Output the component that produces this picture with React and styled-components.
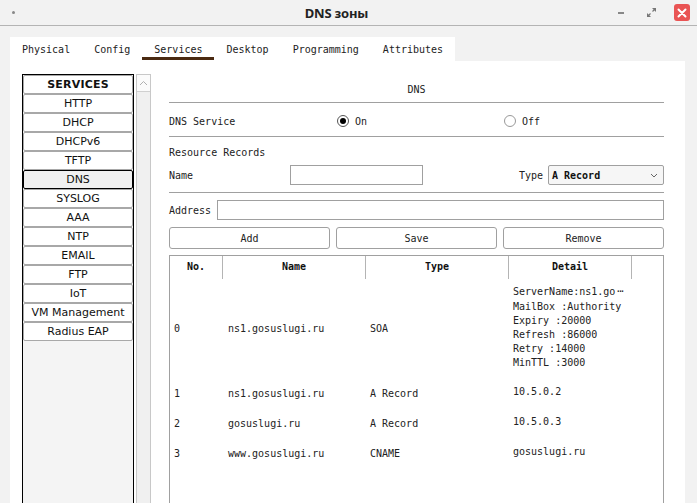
import React from "react";
import styled, { createGlobalStyle } from "styled-components";

const GlobalStyle = createGlobalStyle`
  html, body {
    margin: 0;
    padding: 0;
    background: #f2f2f2;
  }
  * { box-sizing: border-box; }
`;

const MONO = `"DejaVu Sans Mono", "Liberation Mono", monospace`;
const SANS = `"DejaVu Sans", Verdana, sans-serif`;

const services = [
  "HTTP", "DHCP", "DHCPv6", "TFTP", "DNS", "SYSLOG", "AAA",
  "NTP", "EMAIL", "FTP", "IoT", "VM Management", "Radius EAP",
];

const tabs = ["Physical", "Config", "Services", "Desktop", "Programming", "Attributes"];

const records = [
  {
    no: "0", name: "ns1.gosuslugi.ru", type: "SOA",
    detail: [
      "ServerName:ns1.go",
      "MailBox :Authority",
      "Expiry :20000",
      "Refresh :86000",
      "Retry :14000",
      "MinTTL :3000",
    ],
    clipped: true,
  },
  { no: "1", name: "ns1.gosuslugi.ru", type: "A Record", detail: ["10.5.0.2"] },
  { no: "2", name: "gosuslugi.ru", type: "A Record", detail: ["10.5.0.3"] },
  { no: "3", name: "www.gosuslugi.ru", type: "CNAME", detail: ["gosuslugi.ru"] },
];

export default function App() {
  return (
    <>
      <GlobalStyle />
      <Window>
        <TitleBar>
          <MenuDot />
          <Title>DNS зоны</Title>
          <WinControls>
            <MinButton />
            <RestoreIcon width="9" height="9" viewBox="0 0 9 9">
              <path d="M5 0h4v4z M0 9V5l4 4z" fill="#777" />
              <path d="M8 1L5.5 3.5 M1 8l2.5-2.5" stroke="#777" strokeWidth="1.2" />
            </RestoreIcon>
            <CloseButton>
              <svg width="10" height="10" viewBox="0 0 10 10">
                <path d="M1.5 1.5l7 7M8.5 1.5l-7 7" stroke="#fff" strokeWidth="2" strokeLinecap="round" />
              </svg>
            </CloseButton>
          </WinControls>
        </TitleBar>

        <Body>
          <TabStrip>
            {tabs.map((t) => (
              <Tab key={t} active={t === "Services"}>{t}</Tab>
            ))}
          </TabStrip>

          <Panel>
            <Sidebar>
              <ServiceList>
                <ServiceItem header>SERVICES</ServiceItem>
                {services.map((s) => (
                  <ServiceItem key={s} selected={s === "DNS"}>{s}</ServiceItem>
                ))}
              </ServiceList>
              <ScrollTrack>
                <ScrollUp>
                  <svg width="9" height="6" viewBox="0 0 9 6">
                    <path d="M1 5l3.5-3.5L8 5" fill="none" stroke="#b0b0b0" strokeWidth="1" />
                  </svg>
                </ScrollUp>
              </ScrollTrack>
            </Sidebar>

            <Content>
              <Heading>DNS</Heading>
              <Divider />
              <ServiceRow>
                <Label>DNS Service</Label>
                <RadioOption>
                  <Radio checked />
                  On
                </RadioOption>
                <RadioOption>
                  <Radio />
                  Off
                </RadioOption>
              </ServiceRow>
              <Divider />
              <SectionLabel>Resource Records</SectionLabel>
              <NameRow>
                <NameLabel>Name</NameLabel>
                <TextBox width={133} />
                <Spacer />
                <Label>Type</Label>
                <SelectBox>
                  <span>A Record</span>
                  <svg width="8" height="5" viewBox="0 0 8 5">
                    <path d="M1 1l3 3 3-3" fill="none" stroke="#666" strokeWidth="1" />
                  </svg>
                </SelectBox>
              </NameRow>
              <Divider />
              <AddressRow>
                <Label>Address</Label>
                <TextBox grow />
              </AddressRow>
              <ButtonRow>
                <ActionButton>Add</ActionButton>
                <ActionButton>Save</ActionButton>
                <ActionButton>Remove</ActionButton>
              </ButtonRow>

              <Table>
                <HeaderRow>
                  <HeadCell>No.</HeadCell>
                  <HeadCell>Name</HeadCell>
                  <HeadCell>Type</HeadCell>
                  <HeadCell>Detail</HeadCell>
                  <HeadCell />
                </HeaderRow>
                {records.map((r) => (
                  <DataRow key={r.no} tall={r.detail.length > 1}>
                    <Cell>{r.no}</Cell>
                    <Cell>{r.name}</Cell>
                    <Cell>{r.type}</Cell>
                    <Cell>
                      <DetailLines>
                        {r.detail.map((d, i) => (
                          <div key={d}>
                            {d}
                            {r.clipped && i === 0 && <Ellipsis>···</Ellipsis>}
                          </div>
                        ))}
                      </DetailLines>
                    </Cell>
                    <Cell />
                  </DataRow>
                ))}
              </Table>
            </Content>
          </Panel>
        </Body>
      </Window>
    </>
  );
}

const Window = styled.div`
  width: 697px;
  height: 503px;
  display: flex;
  flex-direction: column;
  overflow: hidden;
  background: #f2f2f2;
`;

const TitleBar = styled.div`
  height: 26px;
  flex-shrink: 0;
  border-bottom: 1px solid #b4b4b4;
  display: flex;
  align-items: center;
  padding: 0 7px 0 12px;
`;

const MenuDot = styled.div`
  width: 3px;
  height: 3px;
  border-radius: 50%;
  background: #888;
`;

const Title = styled.div`
  flex: 1;
  text-align: center;
  font-family: "Noto Sans", "Open Sans", sans-serif;
  font-weight: 700;
  font-size: 13px;
  color: #222;
  letter-spacing: -0.2px;
  padding-left: 40px;
`;

const WinControls = styled.div`
  display: flex;
  align-items: center;
`;

const MinButton = styled.div`
  width: 6px;
  height: 2px;
  background: #888;
  margin-right: 23px;
`;

const RestoreIcon = styled.svg`
  margin-right: 18px;
`;

const CloseButton = styled.div`
  width: 16px;
  height: 17px;
  border-radius: 3px;
  background: #e95454;
  display: flex;
  align-items: center;
  justify-content: center;
`;

const Body = styled.div`
  flex: 1;
  display: flex;
  flex-direction: column;
  padding: 11px 12px 0 10px;
  min-height: 0;
`;

const TabStrip = styled.div`
  display: flex;
  align-self: flex-start;
  background: #fff;
  height: 24px;
`;

const Tab = styled.div`
  position: relative;
  padding: 0 12px;
  height: 24px;
  display: flex;
  align-items: center;
  font-family: ${MONO};
  font-size: 10px;
  color: #222;

  &::after {
    content: "";
    display: ${(p) => (p.active ? "block" : "none")};
    position: absolute;
    left: 0;
    right: 0;
    bottom: 1px;
    height: 3px;
    background: #4a2a12;
  }
`;

const Panel = styled.div`
  flex: 1;
  background: #fff;
  display: flex;
  padding: 12px 0 0 12px;
  min-height: 0;
`;

const Sidebar = styled.div`
  display: flex;
  gap: 2px;
  align-self: stretch;
  margin-top: 1px;
`;

const ServiceList = styled.div`
  width: 112px;
  border: 1px solid #000;
  border-bottom: none;
  background: #f4f4f4;
  display: flex;
  flex-direction: column;
`;

const ServiceItem = styled.div`
  height: 19px;
  flex-shrink: 0;
  background: ${(p) => (p.selected ? "#f0f0f0" : "#fff")};
  border: 1px solid ${(p) => (p.selected ? "#000" : "#a8a8a8")};
  border-radius: 2px;
  display: flex;
  align-items: center;
  justify-content: center;
  font-family: ${SANS};
  font-size: 11px;
  font-weight: ${(p) => (p.header ? 700 : 400)};
  color: #111;
  letter-spacing: ${(p) => (p.header ? "0.2px" : "0")};
`;

const ScrollTrack = styled.div`
  width: 15px;
  border: 1px solid #c8c8c8;
  border-bottom: none;
  background: #f0f0f0;
`;

const ScrollUp = styled.div`
  height: 17px;
  background: #fbfbfb;
  border-bottom: 1px solid #d0d0d0;
  display: flex;
  align-items: center;
  justify-content: center;
`;

const Content = styled.div`
  width: 495px;
  margin-left: 18px;
  display: flex;
  flex-direction: column;
  font-family: ${MONO};
  font-size: 10px;
  color: #222;
`;

const Heading = styled.div`
  height: 29px;
  padding-top: 11px;
  line-height: 12px;
  text-align: center;
`;

const Divider = styled.div`
  height: 1px;
  background: #a0a0a0;
  flex-shrink: 0;
`;

const ServiceRow = styled.div`
  height: 33px;
  display: grid;
  grid-template-columns: 168px 167px 1fr;
  align-items: center;
  padding-top: 3px;
`;

const Label = styled.span`
  white-space: pre;
`;

const RadioOption = styled.div`
  display: flex;
  align-items: center;
  gap: 6px;
`;

const Radio = styled.span`
  width: 12px;
  height: 12px;
  border-radius: 50%;
  border: 1px solid ${(p) => (p.checked ? "#555" : "#999")};
  background: #fff;
  display: flex;
  align-items: center;
  justify-content: center;

  &::after {
    content: "";
    display: ${(p) => (p.checked ? "block" : "none")};
    width: 6px;
    height: 6px;
    border-radius: 50%;
    background: #000;
  }
`;

const SectionLabel = styled.div`
  padding-top: 10px;
  line-height: 12px;
  height: 22px;
`;

const NameRow = styled.div`
  margin-top: 6px;
  height: 20px;
  display: flex;
  align-items: center;
  margin-bottom: 7px;
`;

const NameLabel = styled.span`
  width: 121px;
`;

const Spacer = styled.div`
  flex: 1;
`;

const TextBox = styled.div`
  height: 20px;
  width: ${(p) => (p.grow ? "auto" : `${p.width}px`)};
  flex: ${(p) => (p.grow ? 1 : "none")};
  border: 1px solid #a0a0a0;
  background: #fff;
`;

const SelectBox = styled.div`
  margin-left: 5px;
  width: 116px;
  height: 20px;
  border: 1px solid #a0a0a0;
  border-radius: 2px;
  background: #f6f6f6;
  display: flex;
  align-items: center;
  justify-content: space-between;
  padding: 0 5px 0 3px;
  font-weight: 700;
  color: #111;
`;

const AddressRow = styled.div`
  margin-top: 7px;
  height: 20px;
  display: flex;
  align-items: center;
  gap: 6px;
`;

const ButtonRow = styled.div`
  margin-top: 7px;
  display: grid;
  grid-template-columns: repeat(3, 1fr);
  gap: 6px;
`;

const ActionButton = styled.div`
  height: 22px;
  border: 1px solid #a0a0a0;
  border-radius: 3px;
  background: #fff;
  display: flex;
  align-items: center;
  justify-content: center;
`;

const Table = styled.div`
  margin-top: 6px;
  flex: 1;
  border: 1px solid #a0a0a0;
  border-bottom: none;
`;

const columns = "53px 143px 143px 123px 1fr";

const HeaderRow = styled.div`
  display: grid;
  grid-template-columns: ${columns};
  height: 23px;
`;

const HeadCell = styled.div`
  display: flex;
  align-items: center;
  justify-content: center;
  font-weight: 700;
  color: #111;
  border-right: 1px solid #b4b4b4;
  padding-bottom: 2px;

  &:last-child {
    border-right: none;
  }
`;

const DataRow = styled.div`
  display: grid;
  grid-template-columns: ${columns};
  height: ${(p) => (p.tall ? "99px" : "30px")};
`;

const Cell = styled.div`
  display: flex;
  align-items: center;
  padding-left: 4px;
  white-space: nowrap;
  overflow: hidden;

  &:nth-child(2) {
    padding-left: 5px;
  }
`;

const DetailLines = styled.div`
  line-height: 14.2px;
  margin-top: -1px;
`;

const Ellipsis = styled.span`
  letter-spacing: -4px;
`;
